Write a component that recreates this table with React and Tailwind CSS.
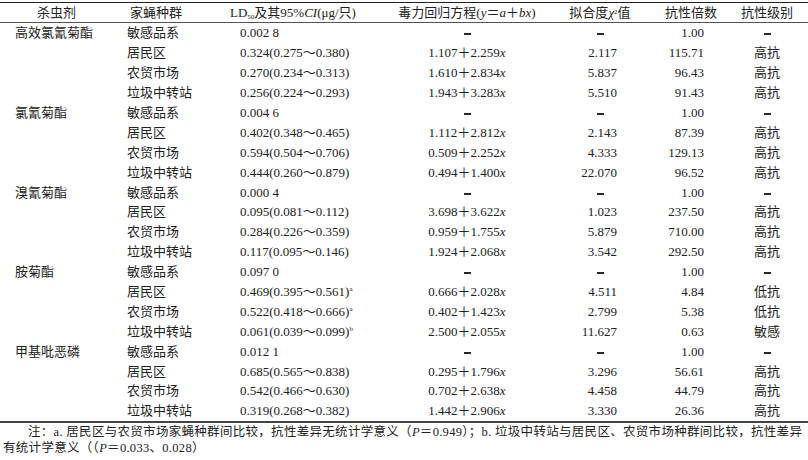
const groups = [
  {
    name: '高效氯氰菊酯',
    rows: [
      { pop: '敏感品系', ld: '0.002 8', fold: '1.00' },
      { pop: '居民区', ld: '0.324(0.275～0.380)', eq: ['1.107', '2.259'], chi: '2.117', fold: '115.71', level: '高抗' },
      { pop: '农贸市场', ld: '0.270(0.234～0.313)', eq: ['1.610', '2.834'], chi: '5.837', fold: '96.43', level: '高抗' },
      { pop: '垃圾中转站', ld: '0.256(0.224～0.293)', eq: ['1.943', '3.283'], chi: '5.510', fold: '91.43', level: '高抗' },
    ],
  },
  {
    name: '氯氰菊酯',
    rows: [
      { pop: '敏感品系', ld: '0.004 6', fold: '1.00' },
      { pop: '居民区', ld: '0.402(0.348～0.465)', eq: ['1.112', '2.812'], chi: '2.143', fold: '87.39', level: '高抗' },
      { pop: '农贸市场', ld: '0.594(0.504～0.706)', eq: ['0.509', '2.252'], chi: '4.333', fold: '129.13', level: '高抗' },
      { pop: '垃圾中转站', ld: '0.444(0.260～0.879)', eq: ['0.494', '1.400'], chi: '22.070', fold: '96.52', level: '高抗' },
    ],
  },
  {
    name: '溴氰菊酯',
    rows: [
      { pop: '敏感品系', ld: '0.000 4', fold: '1.00' },
      { pop: '居民区', ld: '0.095(0.081～0.112)', eq: ['3.698', '3.622'], chi: '1.023', fold: '237.50', level: '高抗' },
      { pop: '农贸市场', ld: '0.284(0.226～0.359)', eq: ['0.959', '1.755'], chi: '5.879', fold: '710.00', level: '高抗' },
      { pop: '垃圾中转站', ld: '0.117(0.095～0.146)', eq: ['1.924', '2.068'], chi: '3.542', fold: '292.50', level: '高抗' },
    ],
  },
  {
    name: '胺菊酯',
    rows: [
      { pop: '敏感品系', ld: '0.097 0', fold: '1.00' },
      { pop: '居民区', ld: '0.469(0.395～0.561)', sup: 'a', eq: ['0.666', '2.028'], chi: '4.511', fold: '4.84', level: '低抗' },
      { pop: '农贸市场', ld: '0.522(0.418～0.666)', sup: 'a', eq: ['0.402', '1.423'], chi: '2.799', fold: '5.38', level: '低抗' },
      { pop: '垃圾中转站', ld: '0.061(0.039～0.099)', sup: 'b', eq: ['2.500', '2.055'], chi: '11.627', fold: '0.63', level: '敏感' },
    ],
  },
  {
    name: '甲基吡恶磷',
    rows: [
      { pop: '敏感品系', ld: '0.012 1', fold: '1.00' },
      { pop: '居民区', ld: '0.685(0.565～0.838)', eq: ['0.295', '1.796'], chi: '3.296', fold: '56.61', level: '高抗' },
      { pop: '农贸市场', ld: '0.542(0.466～0.630)', eq: ['0.702', '2.638'], chi: '4.458', fold: '44.79', level: '高抗' },
      { pop: '垃圾中转站', ld: '0.319(0.268～0.382)', eq: ['1.442', '2.906'], chi: '3.330', fold: '26.36', level: '高抗' },
    ],
  },
];

const cols = 'grid grid-cols-[127px_101px_160px_158px_108px_72px_82px] items-center';

const Dash = () => <span className="inline-block w-[7px] h-[2px] bg-[#2a2a2a] align-middle" />;

const Row = ({ name, r }) => (
  <div className={`${cols} h-[19.9px] leading-none`}>
    <div className="pl-[15px]">{name}</div>
    <div>{r.pop}</div>
    <div className="pl-[12px]">
      {r.ld}
      {r.sup && <sup className="text-[7px] top-[-5px]">{r.sup}</sup>}
    </div>
    <div className="text-center">
      {r.eq ? (
        <>
          {r.eq[0]}＋{r.eq[1]}<i>x</i>
        </>
      ) : (
        <Dash />
      )}
    </div>
    <div className={r.chi ? 'text-right pr-[37px]' : 'text-center'}>{r.chi || <Dash />}</div>
    <div className="text-right pr-[22px]">{r.fold}</div>
    <div className="text-center">{r.level || <Dash />}</div>
  </div>
);

export default function App() {
  return (
    <div className="w-[808px] h-[460px] bg-white text-[#222] text-[13px] font-['Liberation_Serif','Noto_Sans_CJK_SC',serif] pt-[2px]">
      {/* header */}
      <div className={`${cols} h-[21px] leading-none border-t border-b border-t-[#222] border-b-[#555]`}>
        <div className="pl-[37px]">杀虫剂</div>
        <div className="pl-[3px]">家蝇种群</div>
        <div className="pl-[2px]">
          LD<sub className="text-[7px]">50</sub>及其95%<i>CI</i>(μg/只)
        </div>
        <div className="text-center">
          毒力回归方程(<i>y</i>＝<i>a</i>＋<i>bx</i>)
        </div>
        <div className="text-center">
          拟合度<i>χ</i><sup className="text-[7px]">2</sup>值
        </div>
        <div className="text-center pl-[2px]">抗性倍数</div>
        <div className="text-center">抗性级别</div>
      </div>

      {/* body */}
      <div className="border-b-2 border-b-[#444]">
        {groups.map((g) =>
          g.rows.map((r, i) => <Row key={g.name + i} name={i === 0 ? g.name : ''} r={r} />)
        )}
      </div>

      {/* notes */}
      <div className="text-[12.5px] leading-[16px] pt-[1px]">
        <div className="pl-[28px] whitespace-nowrap tracking-[0.3px]">
          注：a. 居民区与农贸市场家蝇种群间比较，抗性差异无统计学意义（<i>P</i>＝0.949）；b. 垃圾中转站与居民区、农贸市场种群间比较，抗性差异
        </div>
        <div className="pl-[3px] whitespace-nowrap tracking-[0.3px]">
          有统计学意义（（<i>P</i>＝0.033、0.028）
        </div>
      </div>
    </div>
  );
}
